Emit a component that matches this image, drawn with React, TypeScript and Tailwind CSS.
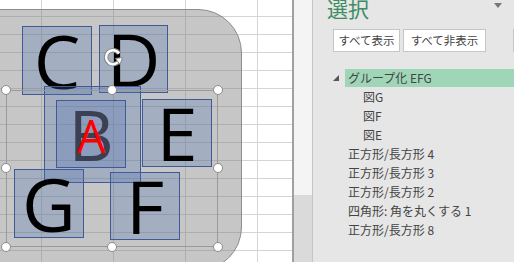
import React from 'react'

const cols = [0, 1, 2, 3, 4]
const rows = Array.from({ length: 16 }, (_, i) => i)

const handles = [
  { x: 6, y: 90 },
  { x: 112, y: 90 },
  { x: 218, y: 90 },
  { x: 6, y: 168 },
  { x: 218, y: 168 },
  { x: 6, y: 247 },
  { x: 112, y: 247 },
  { x: 218, y: 247 },
]

const items = [
  { label: 'グループ化 EFG', level: 0, group: true, selected: true },
  { label: '図G', level: 1 },
  { label: '図F', level: 1 },
  { label: '図E', level: 1 },
  { label: '正方形/長方形 4', level: 0 },
  { label: '正方形/長方形 3', level: 0 },
  { label: '正方形/長方形 2', level: 0 },
  { label: '四角形: 角を丸くする 1', level: 0 },
  { label: '正方形/長方形 8', level: 0 },
]

const Square = ({
  className,
  children,
}: {
  className: string
  children?: React.ReactNode
}) => (
  <div
    className={`absolute flex items-center justify-center border border-[#3f5a97] bg-[rgba(74,110,180,0.28)] ${className}`}
  >
    {children}
  </div>
)

const Letter = ({ ch }: { ch: string }) => (
  <span className="font-['Open_Sans',sans-serif] text-[74px] leading-none text-black">
    {ch}
  </span>
)

// rotation handle above the group
const RotateHandle = () => (
  <svg width="24" height="24" viewBox="0 0 24 24" className="absolute left-[101px] top-[45px]">
    <path d="M18 8.5 A7 7 0 1 0 18.5 15" fill="none" stroke="#8a8a8a" strokeWidth="4.4" />
    <path d="M18 8.5 A7 7 0 1 0 18.5 15" fill="none" stroke="#fff" strokeWidth="2.4" />
    <path d="M14.5 13.5 L21.5 12.5 L19 19.5 Z" fill="#fff" stroke="#8a8a8a" strokeWidth="1" strokeLinejoin="round" />
  </svg>
)

const Sheet = () => (
  <div className="relative h-full w-[292px] shrink-0 overflow-hidden bg-white">
    <div className="absolute left-[-30px] top-[-1px] grid grid-cols-[repeat(5,72px)] auto-rows-[18px]">
      {rows.map((r) =>
        cols.map((c) => (
          <div key={`${r}-${c}`} className="border-b border-r border-[#d4d4d4]" />
        )),
      )}
    </div>

    <div className="absolute left-[-60px] top-[9px] h-[262px] w-[302px] rounded-[44px] border border-[#8c8c8c] bg-[rgba(128,128,128,0.45)]" />

    <Square className="left-[22px] top-[26px] h-[69px] w-[70px]">
      <Letter ch="C" />
    </Square>
    <Square className="left-[99px] top-[25px] h-[68px] w-[69px]">
      <Letter ch="D" />
    </Square>
    <Square className="left-[44px] top-[86px] h-[97px] w-[97px]" />
    <Square className="left-[56px] top-[100px] h-[68px] w-[70px]">
      <span className="font-['Open_Sans',sans-serif] text-[70px] leading-none text-[#3b4152]">B</span>
      <span className="absolute left-[20px] top-[12px] font-['Open_Sans',sans-serif] text-[45px] leading-none text-[#ff0000]">
        A
      </span>
    </Square>
    <Square className="left-[142px] top-[99px] h-[68px] w-[70px]">
      <Letter ch="E" />
    </Square>
    <Square className="left-[14px] top-[169px] h-[69px] w-[70px]">
      <Letter ch="G" />
    </Square>
    <Square className="left-[110px] top-[172px] h-[68px] w-[70px]">
      <Letter ch="F" />
    </Square>

    <div className="absolute left-[6px] top-[90px] h-[157px] w-[212px] border border-[#9a9a9a]" />
    {handles.map((h, i) => (
      <div
        key={i}
        className="absolute h-[10px] w-[10px] -translate-x-1/2 -translate-y-1/2 rounded-full border-[1.5px] border-[#8a8a8a] bg-white"
        style={{ left: h.x, top: h.y }}
      />
    ))}
    <RotateHandle />
  </div>
)

const Scrollbar = () => (
  <div className="flex h-full shrink-0">
    <div className="w-[2px] bg-[#a0a0a0]" />
    <div className="flex w-[18px] flex-col bg-[#dadada]">
      <div className="h-[195px] bg-[#f4f4f4]" />
    </div>
    <div className="w-px bg-[#c4c4c4]" />
  </div>
)

const Pane = () => (
  <div className="relative h-full flex-1 overflow-hidden bg-[#e6e6e6] font-['Noto_Sans_CJK_JP',sans-serif] text-[#444444]">
    <div className="flex items-start justify-between pl-[14px] pr-[12px]">
      <div className="-mt-[2px] text-[21px] leading-[21px] text-[#3c8c64]">選択</div>
      <div className="mt-[3px] h-0 w-0 border-x-[4px] border-t-[5px] border-x-transparent border-t-[#777777]" />
    </div>
    <div className="mt-[10px] flex gap-[3px] pl-[20px]">
      <div className="flex h-[23px] w-[67px] shrink-0 items-center justify-center border border-[#c6c6c6] bg-white text-[11.5px]">
        すべて表示
      </div>
      <div className="flex h-[23px] w-[83px] shrink-0 items-center justify-center border border-[#c6c6c6] bg-white text-[11.5px]">
        すべて非表示
      </div>
      <div className="ml-[24px] h-[23px] w-[40px] shrink-0 border border-[#c6c6c6] bg-white" />
    </div>
    <div className="mt-[16px] flex flex-col">
      {items.map((it) => (
        <div key={it.label} className="flex h-[19px] items-center pl-[20px]">
          <div className="flex w-[12px] shrink-0 items-center">
            {it.group && (
              <div className="h-0 w-0 border-b-[6px] border-l-[6px] border-b-[#555555] border-l-transparent" />
            )}
          </div>
          <div
            className={`flex h-[18px] flex-1 items-center text-[12px] leading-none ${
              it.selected ? 'bg-[#a0d6b8]' : ''
            } ${it.level === 1 ? 'pl-[18px]' : 'pl-[3px]'}`}
          >
            {it.label}
          </div>
        </div>
      ))}
    </div>
  </div>
)

export default function App() {
  return (
    <div className="flex h-[262px] w-[514px] overflow-hidden">
      <Sheet />
      <Scrollbar />
      <Pane />
    </div>
  )
}
